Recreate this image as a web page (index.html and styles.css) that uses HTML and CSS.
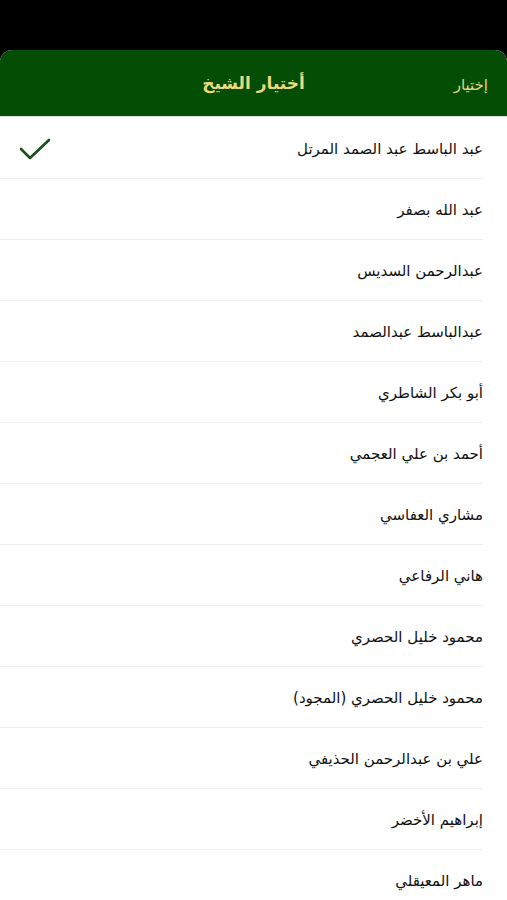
FILE: index.html
```html
<!DOCTYPE html>
<html lang="ar" dir="rtl">
<head>
    <meta charset="UTF-8">
    <meta name="viewport" content="width=device-width, initial-scale=1.0">
    <title>أختيار الشيخ</title>
    <link rel="stylesheet" href="styles.css">
</head>
<body>
    <div class="status-bar"></div>

    <div class="sheet">
        <div class="nav-bar">
            <span class="nav-action">إختيار</span>
            <h1 class="nav-title">أختيار الشيخ</h1>
            <span class="nav-spacer"></span>
        </div>

        <ul class="reciter-list">
            <li class="reciter selected">
                <span class="name">عبد الباسط عبد الصمد المرتل</span>
                <svg class="check" width="32" height="24" viewBox="0 0 32 24">
                    <path d="M2 12 L11 21 L30 3" fill="none" stroke="#1d4d1d" stroke-width="2.6" stroke-linecap="round" stroke-linejoin="round"/>
                </svg>
            </li>
            <li class="reciter"><span class="name">عبد الله بصفر</span></li>
            <li class="reciter"><span class="name">عبدالرحمن السديس</span></li>
            <li class="reciter"><span class="name">عبدالباسط عبدالصمد</span></li>
            <li class="reciter"><span class="name">أبو بكر الشاطري</span></li>
            <li class="reciter"><span class="name">أحمد بن علي العجمي</span></li>
            <li class="reciter"><span class="name">مشاري العفاسي</span></li>
            <li class="reciter"><span class="name">هاني الرفاعي</span></li>
            <li class="reciter"><span class="name">محمود خليل الحصري</span></li>
            <li class="reciter"><span class="name">محمود خليل الحصري (المجود)</span></li>
            <li class="reciter"><span class="name">علي بن عبدالرحمن الحذيفي</span></li>
            <li class="reciter"><span class="name">إبراهيم الأخضر</span></li>
            <li class="reciter"><span class="name">ماهر المعيقلي</span></li>
        </ul>
    </div>
</body>
</html>
```

FILE: styles.css
```css
body {
    margin: 0;
    background-color: #000;
    font-family: 'DejaVu Sans', 'Noto Sans', sans-serif;
    overflow: hidden;
}

.status-bar {
    height: 50px;
    background-color: #000;
}

.sheet {
    background-color: #fff;
    border-radius: 12px 12px 0 0;
    overflow: hidden;
}

.nav-bar {
    height: 66px;
    background-color: #044d05;
    display: flex;
    align-items: center;
    justify-content: space-between;
    padding: 0 19px;
    border-bottom: 1px solid #dfe6df;
}

.nav-title {
    margin: 0;
    color: #e9d97c;
    font-size: 17px;
    font-weight: bold;
    padding-bottom: 1px;
}

.nav-action {
    color: #e3d47c;
    font-size: 15px;
    width: 80px;
    padding-top: 4px;
}

.nav-spacer {
    width: 80px;
}

.reciter-list {
    list-style: none;
    margin: 0;
    padding: 1px 0 0;
}

.reciter {
    height: 60px;
    display: flex;
    align-items: center;
    justify-content: space-between;
    margin-right: 24px;
    border-bottom: 1px solid #eeeeee;
    color: #111;
    font-size: 15px;
}

.reciter .name {
    padding-top: 2px;
}

.check {
    margin-left: 19px;
    margin-top: 1px;
}
```
